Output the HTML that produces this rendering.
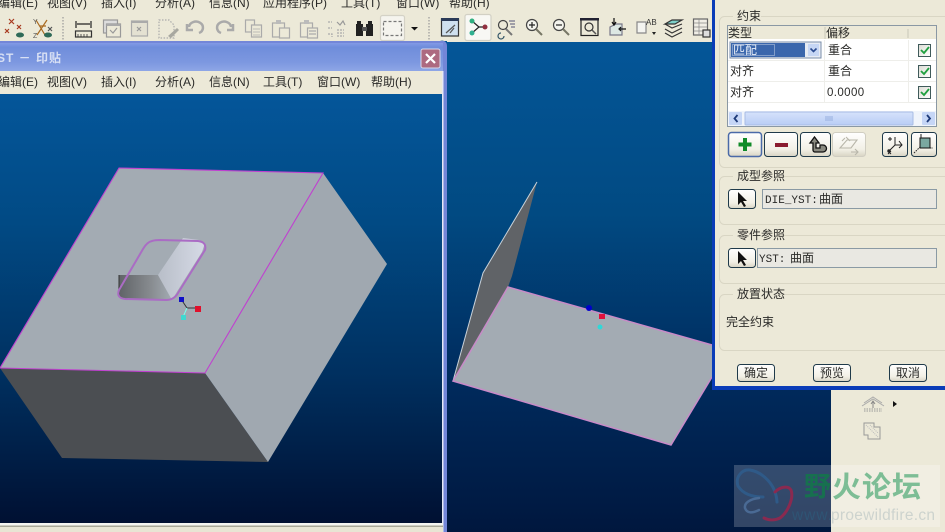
<!DOCTYPE html>
<html><head><meta charset="utf-8"><style>
html,body{margin:0;padding:0;background:#ece9d8;width:945px;height:532px;overflow:hidden}
svg{display:block}
text{font-family:"Liberation Sans","Noto Sans CJK SC",sans-serif;font-size:12px;fill:#2a2a28}
.m{font-family:"Liberation Mono","Noto Sans CJK SC",monospace;font-size:11px}
</style></head><body>
<svg width="945" height="532" viewBox="0 0 945 532" xmlns="http://www.w3.org/2000/svg">
<defs>
<linearGradient id="bgL" x1="0" y1="0" x2="0" y2="1"><stop offset="0" stop-color="#04569a"/><stop offset=".3" stop-color="#014a84"/><stop offset=".65" stop-color="#003060"/><stop offset="1" stop-color="#001032"/></linearGradient>
<linearGradient id="bgR" x1="0" y1="0" x2="0" y2="1"><stop offset="0" stop-color="#045698"/><stop offset=".35" stop-color="#014a82"/><stop offset=".7" stop-color="#002a5c"/><stop offset="1" stop-color="#00173e"/></linearGradient>
<linearGradient id="title" x1="0" y1="0" x2="0" y2="1"><stop offset="0" stop-color="#8299e6"/><stop offset=".15" stop-color="#6f8ddb"/><stop offset=".7" stop-color="#7d98e0"/><stop offset="1" stop-color="#8ea6e6"/></linearGradient>
<linearGradient id="holeD" x1="0" y1="0" x2="1" y2="0"><stop offset="0" stop-color="#5f6266"/><stop offset=".6" stop-color="#878b8f"/><stop offset="1" stop-color="#a3abb3"/></linearGradient>
<linearGradient id="holeL" x1="0" y1="0" x2="1" y2="0"><stop offset="0" stop-color="#b8bec8"/><stop offset="1" stop-color="#d6dae6"/></linearGradient>
<linearGradient id="btn" x1="0" y1="0" x2="0" y2="1"><stop offset="0" stop-color="#fff"/><stop offset=".7" stop-color="#f2f0e6"/><stop offset="1" stop-color="#d8d4c4"/></linearGradient>
<linearGradient id="scr" x1="0" y1="0" x2="0" y2="1"><stop offset="0" stop-color="#d6e2fb"/><stop offset="1" stop-color="#b8cdf5"/></linearGradient>
<linearGradient id="chk" x1="0" y1="0" x2="1" y2="1"><stop offset="0" stop-color="#dcdcd4"/><stop offset="1" stop-color="#fff"/></linearGradient>
</defs>

<!-- base -->
<rect width="945" height="532" fill="#ece9d8"/>

<!-- right viewport -->
<rect x="444" y="42" width="501" height="490" fill="url(#bgR)"/>
<polygon points="537,182 483,273 453,381 508,287 512,276" fill="#606367"/>
<polyline points="537,182 483,273 453,381" fill="none" stroke="#c8d2da" stroke-width="1"/>
<polygon points="508,287 712,345 712,377 671,445 453,381" fill="#a3abb3"/>
<polyline points="712,345 508,287 453,381 671,445 712,377" fill="none" stroke="#c88ac8" stroke-width="1.5"/>
<circle cx="589" cy="308" r="3" fill="#0000cc"/>
<rect x="599" y="314" width="6" height="5" fill="#e0103c"/>
<circle cx="600" cy="327" r="2.5" fill="#30d8d8"/>

<!-- top menu -->
<g>
<text x="-2" y="7">编辑(E)</text><text x="47" y="7">视图(V)</text><text x="101" y="7">插入(I)</text><text x="155" y="7">分析(A)</text><text x="209" y="7">信息(N)</text><text x="263" y="7">应用程序(P)</text><text x="341" y="7">工具(T)</text><text x="396" y="7">窗口(W)</text><text x="449" y="7">帮助(H)</text>
</g>

<!-- toolbar -->
<g fill="none" stroke-width="1.2">
<rect x="0" y="12" width="712" height="29" fill="#ece9d8" stroke="none"/>
<path d="M9 19l5 5M14 19l-5 5M17 25l4 4M21 25l-4 4M5 29l4 4M9 29l-4 4" stroke="#a83a20"/>
<ellipse cx="20" cy="35" rx="4" ry="2.5" fill="#2f6a58" stroke="none"/>
<path d="M36 20l9 15M47 20l-10 15M40 26h6" stroke="#a86a20"/>
<text x="33" y="24" style="font-size:7px;fill:#555">Y</text><text x="33" y="38" style="font-size:7px;fill:#555">Z</text>
<path d="M48 27l4 4M52 27l-4 4" stroke="#555"/>
<ellipse cx="48" cy="35" rx="4" ry="2.5" fill="#2f6a58" stroke="none"/>
<path d="M63 17v23" stroke="#999" stroke-dasharray="1.5 1.5"/>
<path d="M76 21v7M91 21v7M77 24h13" stroke="#222"/>
<rect x="75.500" y="31" width="16" height="6" stroke="#333"/><path d="M78 34v3M81 34v3M84 34v3M87 34v3" stroke="#333" stroke-width=".8"/>
<rect x="103.500" y="20" width="14" height="13" stroke="#999" fill="#ddd"/><rect x="106.500" y="24" width="14" height="13" stroke="#999" fill="#ece9d8"/><path d="M110 30l3 3 4-5" stroke="#999"/><rect x="106.500" y="24" width="14" height="2" fill="#aaa" stroke="none"/>
<rect x="131.500" y="21" width="16" height="15" stroke="#aaa" fill="#e4e1d2"/><rect x="131.500" y="21" width="16" height="2" fill="#aaa" stroke="none"/><path d="M137 27l4 4M141 27l-4 4" stroke="#999"/>
<path d="M159 20h10l5 5v13h-15z" stroke="#aaa" stroke-dasharray="1.500 1.500"/><path d="M168 36l9-8 2 2-8 8z" fill="#a8a8a0" stroke="none"/>
<path d="M189 27a7 6 0 1 1 10 6M187 24v6h6" stroke="#aaa" stroke-width="2.500"/>
<path d="M231 27a7 6 0 1 0-10 6M233 24v6h-6" stroke="#aaa" stroke-width="2.500"/>
<rect x="245.500" y="20" width="9" height="12" stroke="#aaa"/><rect x="251.500" y="25" width="10" height="12" stroke="#aaa" fill="#ece9d8"/><path d="M253 29h7M253 32h7M253 35h7" stroke="#aaa" stroke-width=".8"/>
<rect x="272.500" y="23" width="12" height="14" stroke="#aaa"/><rect x="276" y="20" width="5" height="4" fill="#bbb" stroke="none"/><rect x="279.500" y="28" width="10" height="10" stroke="#aaa" fill="#ece9d8"/>
<rect x="300.500" y="23" width="12" height="14" stroke="#aaa"/><rect x="304" y="20" width="5" height="4" fill="#bbb" stroke="none"/><rect x="307.500" y="28" width="10" height="10" stroke="#aaa" fill="#ece9d8"/><path d="M309 31h7M309 34h7" stroke="#aaa"/>
<path d="M328 22h4M328 28h4M328 34h4v3M337 30h7M337 33h7M337 36h7" stroke="#aaa" stroke-dasharray="2 1"/><path d="M337 22l3 3 3-4 2 4" stroke="#999"/>
<path d="M356 24h7v12h-7zM366 24h7v12h-7z" fill="#222" stroke="none"/><rect x="357" y="21" width="4" height="4" fill="#222" stroke="none"/><rect x="368" y="21" width="4" height="4" fill="#222" stroke="none"/><rect x="362" y="27" width="5" height="4" fill="#555" stroke="none"/>
<rect x="380.500" y="15.500" width="24" height="25" rx="2" fill="#f5f4ee" stroke="#d4d2c6"/>
<rect x="383.500" y="21.500" width="18" height="14" stroke="#777" stroke-dasharray="3 2"/>
<polygon points="411,27 418,27 414.500,30.500" fill="#111"/>
<path d="M429 17v23" stroke="#999" stroke-dasharray="1.5 1.5"/>
<!-- right toolbar -->
<rect x="441.500" y="19" width="17" height="17" fill="#cfe0ef" stroke="#333"/><rect x="441" y="18" width="18" height="3" fill="#2a3a58" stroke="none"/><path d="M446 33l9-8M450 33l4-5" stroke="#555"/>
<rect x="465" y="14.500" width="26" height="26" rx="2" fill="#f8f8f4" stroke="#d2d0c4"/>
<path d="M472 21l7 6-7 6M479 27h6" stroke="#222"/><circle cx="472" cy="21" r="2.500" fill="#30b080" stroke="none"/><circle cx="472" cy="33" r="2.500" fill="#30b090" stroke="none"/><circle cx="485" cy="27" r="2.500" fill="#903040" stroke="none"/>
<circle cx="503" cy="25" r="4.500" stroke="#444"/><path d="M506 29l6 6" stroke="#777" stroke-width="2"/><path d="M509 21h6M510 24h5M511 27h4" stroke="#557" stroke-width="1"/><path d="M501 33a3 3 0 1 0 3 3" stroke="#356"/>
<circle cx="532" cy="25" r="5.500" stroke="#444" fill="#f4f4ee"/><path d="M529 25h6M532 22v6" stroke="#222"/><path d="M536 29l6 6" stroke="#776" stroke-width="2"/>
<circle cx="559" cy="25" r="5.500" stroke="#444" fill="#f4f4ee"/><path d="M556 25h6" stroke="#222"/><path d="M563 29l6 6" stroke="#776" stroke-width="2"/>
<rect x="581" y="19.500" width="17" height="16" stroke="#222"/><rect x="580" y="18" width="19" height="2.500" fill="#223" stroke="none"/><circle cx="589" cy="27" r="4" stroke="#333"/><path d="M592 30l4 4" stroke="#555" stroke-width="1.500"/>
<path d="M610 27l6-3h6v11h-12z" fill="#dde8e4" stroke="#778"/><path d="M614 18v7M626 29h-6M612 22l2 3 2-3M621 27l-2 2 2 2" stroke="#111"/>
<path d="M637 22h9v11h-9z" fill="#f4f4f0" stroke="#888"/><text x="646" y="25" style="font-size:8px;fill:#333">AB</text><polygon points="652,32 656,32 654,35" fill="#222"/>
<path d="M665 24l7-4h10l-7 4z" fill="#7ccfc8" stroke="#333"/><path d="M665 29l7 4 10-5M665 33l7 4 10-5" stroke="#333"/><path d="M665 24l7 4 10-4" stroke="#333"/>
<rect x="693.500" y="19" width="14" height="16" stroke="#666" fill="#f0eee6"/><path d="M694 23h13M694 27h13M694 31h13M699 19v16" stroke="#888" stroke-width=".7"/><rect x="703" y="30" width="7" height="7" fill="#ddd" stroke="#333"/>
</g>

<!-- left window -->
<rect x="0" y="41" width="447" height="491" fill="#7386d8"/>
<path d="M440 41h7v5a5 5 0 0 0-7-5z" fill="#045698"/>
<rect x="0" y="43" width="443" height="28" fill="url(#title)"/>
<rect x="0" y="71" width="442" height="453" fill="#ece9d8"/>
<rect x="442" y="71" width="1.500" height="461" fill="#e6e8f4"/>
<text x="-3" y="62" style="font-size:12px;font-weight:bold;fill:#d8e0f4;letter-spacing:1px">ST － 印贴</text>
<rect x="421" y="49" width="19" height="19" rx="2" fill="#ad6a80" stroke="#d8d8e8"/>
<path d="M426 54l9 9M435 54l-9 9" stroke="#fff" stroke-width="2.200"/>
<text x="-2" y="86">编辑(E)</text><text x="47" y="86">视图(V)</text><text x="101" y="86">插入(I)</text><text x="155" y="86">分析(A)</text><text x="209" y="86">信息(N)</text><text x="263" y="86">工具(T)</text><text x="317" y="86">窗口(W)</text><text x="371" y="86">帮助(H)</text>

<rect x="0" y="94" width="442" height="429" fill="url(#bgL)"/>
<rect x="0" y="523" width="443" height="2.500" fill="#f4f4f0"/>
<rect x="0" y="525.500" width="443" height="1.500" fill="#a8a898"/>
<rect x="0" y="527" width="443" height="5" fill="#e8e5d4"/>

<!-- block -->
<polygon points="0,368 205,373 268,462 62,458" fill="#4b4e52"/>
<polygon points="323,173 387,264 268,462 205,373" fill="#a0a8b0"/>
<polygon points="119,168 323,173 205,373 0,368" fill="#a3abb3"/>
<polyline points="0,368 119,168 323,173 205,373 0,368" fill="none" stroke="#c040d0" stroke-width="1.100"/>
<polygon points="119,275 158,275 172,300 124,299 118,296" fill="url(#holeD)"/>
<polygon points="158,275 183,238 199,240 205,243 202,252 178,290 172,300" fill="url(#holeL)"/>
<path d="M119 275v21" stroke="#333" stroke-width="1"/>
<path d="M152 241 Q155 240 160 240 L198 241 Q207 242 205 250 L178 293 Q174 300 166 300 L125 299 Q116 298 119 290 L143 249 Q147 242 152 241Z" fill="none" stroke="#aa6cc4" stroke-width="2"/>
<path d="M181 299l6 9h11" fill="none" stroke="#333" stroke-width="1"/>
<path d="M187 308l-4 9" stroke="#7fe" stroke-width="1"/>
<rect x="179" y="297" width="5" height="5" fill="#1010c8"/>
<rect x="195" y="306" width="6" height="6" fill="#e0102c"/>
<rect x="181" y="315" width="5" height="5" fill="#40d8d0"/>

<!-- right lower panel -->
<rect x="831" y="390" width="114" height="142" fill="#ece9d8"/>
<g fill="none" stroke="#999" stroke-width="1">
<path d="M864 403l9-6 9 6M862 406l11-7 11 7" stroke="#aaa"/><path d="M873 401v7M871 404l2-3 2 3" stroke="#888"/><path d="M864 409h18M864 411h18" stroke-dasharray="1.500 1"/>
<path d="M864 423h10v4h6v12h-12v-4h-4z" stroke="#999"/><path d="M866 425l12 12M870 425l8 8" stroke="#bbb" stroke-dasharray="1 1"/>
</g>
<polygon points="893,401 897,404 893,407" fill="#111"/>

<!-- dialog -->
<rect x="712" y="0" width="233" height="390" fill="#0a3cb8"/>
<rect x="715" y="0" width="230" height="386" fill="#ece9d8"/>

<g fill="none" stroke="#d9d6c4">
<rect x="719.500" y="16.500" width="230" height="151" rx="5"/>
<rect x="719.500" y="176.500" width="230" height="48" rx="5"/>
<rect x="719.500" y="235.500" width="230" height="48" rx="5"/>
<rect x="719.500" y="294.500" width="230" height="56" rx="5"/>
</g>
<rect x="733" y="10" width="28" height="12" fill="#ece9d8"/>
<rect x="733" y="170" width="46" height="12" fill="#ece9d8"/>
<rect x="733" y="229" width="46" height="12" fill="#ece9d8"/>
<rect x="733" y="288" width="46" height="12" fill="#ece9d8"/>
<text x="737" y="20">约束</text>
<text x="737" y="180">成型参照</text>
<text x="737" y="239">零件参照</text>
<text x="737" y="298">放置状态</text>

<!-- table -->
<rect x="727.500" y="25.500" width="209" height="101" fill="#fff" stroke="#8a98a4"/>
<rect x="728" y="26" width="208" height="13" fill="#ece9d8"/>
<path d="M825 27v12M908 29v9" stroke="#c8c6b8"/>
<text x="728" y="37">类型</text><text x="826" y="37">偏移</text>
<path d="M728 60.500h208M728 81.500h208M728 102.500h208M824.500 40v62M908.500 40v62" stroke="#eeeeea"/>
<rect x="730" y="42" width="91" height="16" fill="#e6ebf4" stroke="#7a8ea8"/>
<rect x="731" y="43" width="74" height="14" fill="#3a66ac"/>
<rect x="732.500" y="44.500" width="42" height="11" fill="none" stroke="#c8d4e8" stroke-dasharray="1 1"/>
<text x="733" y="54" style="fill:#e8eef8">匹配</text>
<rect x="808" y="44" width="11" height="12" fill="#c6d6f4"/>
<path d="M810.500 48.500l3 3 3-3" fill="none" stroke="#2a4a90" stroke-width="1.600"/>
<text x="730" y="75">对齐</text><text x="730" y="96">对齐</text>
<text x="828" y="54">重合</text><text x="828" y="75">重合</text>
<text x="827" y="96" style="font-size:11.500px;letter-spacing:.4px">0.0000</text>
<g>
<rect x="918.500" y="44.500" width="12" height="12" fill="url(#chk)" stroke="#3f5a5a"/><path d="M921 50l3 3 5-6" fill="none" stroke="#20a040" stroke-width="1.800"/>
<rect x="918.500" y="65.500" width="12" height="12" fill="url(#chk)" stroke="#3f5a5a"/><path d="M921 71l3 3 5-6" fill="none" stroke="#20a040" stroke-width="1.800"/>
<rect x="918.500" y="86.500" width="12" height="12" fill="url(#chk)" stroke="#3f5a5a"/><path d="M921 92l3 3 5-6" fill="none" stroke="#20a040" stroke-width="1.800"/>
</g>
<!-- scrollbar -->
<rect x="728" y="111" width="208" height="15" fill="#f0f4fb"/>
<rect x="729" y="112" width="13" height="13" rx="1" fill="#c6d6f6"/>
<path d="M737.500 115l-3 3.500 3 3.500" fill="none" stroke="#1e3a78" stroke-width="1.800"/>
<rect x="745" y="112" width="168" height="13" rx="1" fill="url(#scr)" stroke="#a8bce4"/>
<path d="M826 116v5M828 116v5M830 116v5M832 116v5" stroke="#8aa4d8" stroke-width=".8"/>
<rect x="922" y="112" width="13" height="13" rx="1" fill="#c6d6f6"/>
<path d="M927 115l3 3.500-3 3.500" fill="none" stroke="#1e3a78" stroke-width="1.800"/>

<!-- buttons row -->
<g stroke="#1f3a4a" fill="url(#btn)">
<rect x="728.500" y="132.500" width="33" height="24" rx="3" stroke="#4a6aa8" stroke-width="1.500"/>
<rect x="764.500" y="132.500" width="33" height="24" rx="3"/>
<rect x="800.500" y="132.500" width="30" height="24" rx="3"/>
<rect x="832.500" y="132.500" width="33" height="24" rx="3" stroke="#d0cec2"/>
<rect x="882.500" y="132.500" width="25" height="24" rx="3"/>
<rect x="911.500" y="132.500" width="25" height="24" rx="3"/>
</g>
<path d="M745 138v13M738.500 144.500h13" stroke="#0f8a28" stroke-width="4"/>
<path d="M775 145h13" stroke="#8a1c30" stroke-width="4"/>
<path d="M810 143l4.500-6 4.500 6h-3v5h4v-3h3a3 3 0 0 1 0 7h-8a2 2 0 0 1-2-2v-7z" fill="#8a8a80" stroke="#111" stroke-width="1.300"/>
<path d="M840 148l7-8h10l-6 8z M846 137l4 4M842 141l3-3M851 152h7M855 149l3 3-3 3" fill="none" stroke="#b8b6aa" stroke-width="1.100"/>
<g fill="none" stroke="#222" stroke-width="1">
<path d="M895 137v8l-5 5M895 145h7M888 139h4M890 137v4M899 141l3 4-3 3M888 151l3 3M888 154l3-3" />
<circle cx="889" cy="151" r="1.200" fill="#222"/>
<path d="M914 153l6-6" stroke-dasharray="1.500 1"/><path d="M925 148h8" stroke-dasharray="1.500 1"/>
<rect x="920" y="138" width="10" height="10" fill="#7aa8a0" stroke="#111"/><path d="M921 134v4" />
</g>

<!-- select buttons + fields -->
<rect x="728.500" y="189.500" width="27" height="19" rx="3" fill="url(#btn)" stroke="#1f3a4a"/>
<path d="M738 192v13l3-3 3 5 2-1-3-5h4z" fill="#111"/>
<rect x="762.500" y="189.500" width="174" height="19" fill="#e9e8e2" stroke="#8a9aa4"/>
<text x="765" y="203" class="m">DIE_YST:</text><text x="819" y="203">曲面</text>

<rect x="728.500" y="248.500" width="27" height="19" rx="3" fill="url(#btn)" stroke="#1f3a4a"/>
<path d="M738 251v13l3-3 3 5 2-1-3-5h4z" fill="#111"/>
<rect x="757.500" y="248.500" width="179" height="19" fill="#e9e8e2" stroke="#8a9aa4"/>
<text x="759" y="262" class="m">YST:</text><text x="790" y="262">曲面</text>

<text x="726" y="326">完全约束</text>

<g fill="url(#btn)" stroke="#1f3a4a">
<rect x="737.500" y="364.500" width="37" height="17" rx="3"/>
<rect x="813.500" y="364.500" width="37" height="17" rx="3"/>
<rect x="889.500" y="364.500" width="37" height="17" rx="3"/>
</g>
<text x="744" y="377">确定</text><text x="820" y="377">预览</text><text x="896" y="377">取消</text>

<!-- watermark -->
<rect x="734" y="465" width="97" height="62" fill="#ffffff" opacity=".2"/>
<rect x="831" y="465" width="109" height="62" fill="#ffffff" opacity=".25"/>
<g fill="none" stroke-linecap="round">
<path d="M763 497C752 497 743 494 738 486C735 477 742 469 750 470C762 472 776 484 777 502" stroke="#2f5a88" stroke-width="3"/>
<path d="M775 492C780 487 788 485 791 490C794 498 788 512 780 518C774 521 768 520 764 518" stroke="#8a2a50" stroke-width="3"/>
<path d="M759 498C750 499 744 503 745 508C747 514 753 513 759 510" stroke="#4a6a94" stroke-width="2.500"/>
</g>
<text x="804" y="496" style="font-size:27px;font-weight:bold;fill:#17704f">野</text>
<text x="832" y="497" style="font-size:29px;font-weight:bold;fill:#7dbd95;letter-spacing:1px">火论坛</text>
<text x="792" y="520" style="font-size:15.500px;fill:#2f5474" textLength="40">www.</text>
<text x="831" y="520" style="font-size:15.500px;fill:#cdd3ce" textLength="104">proewildfire.cn</text>
</svg>
</body></html>
